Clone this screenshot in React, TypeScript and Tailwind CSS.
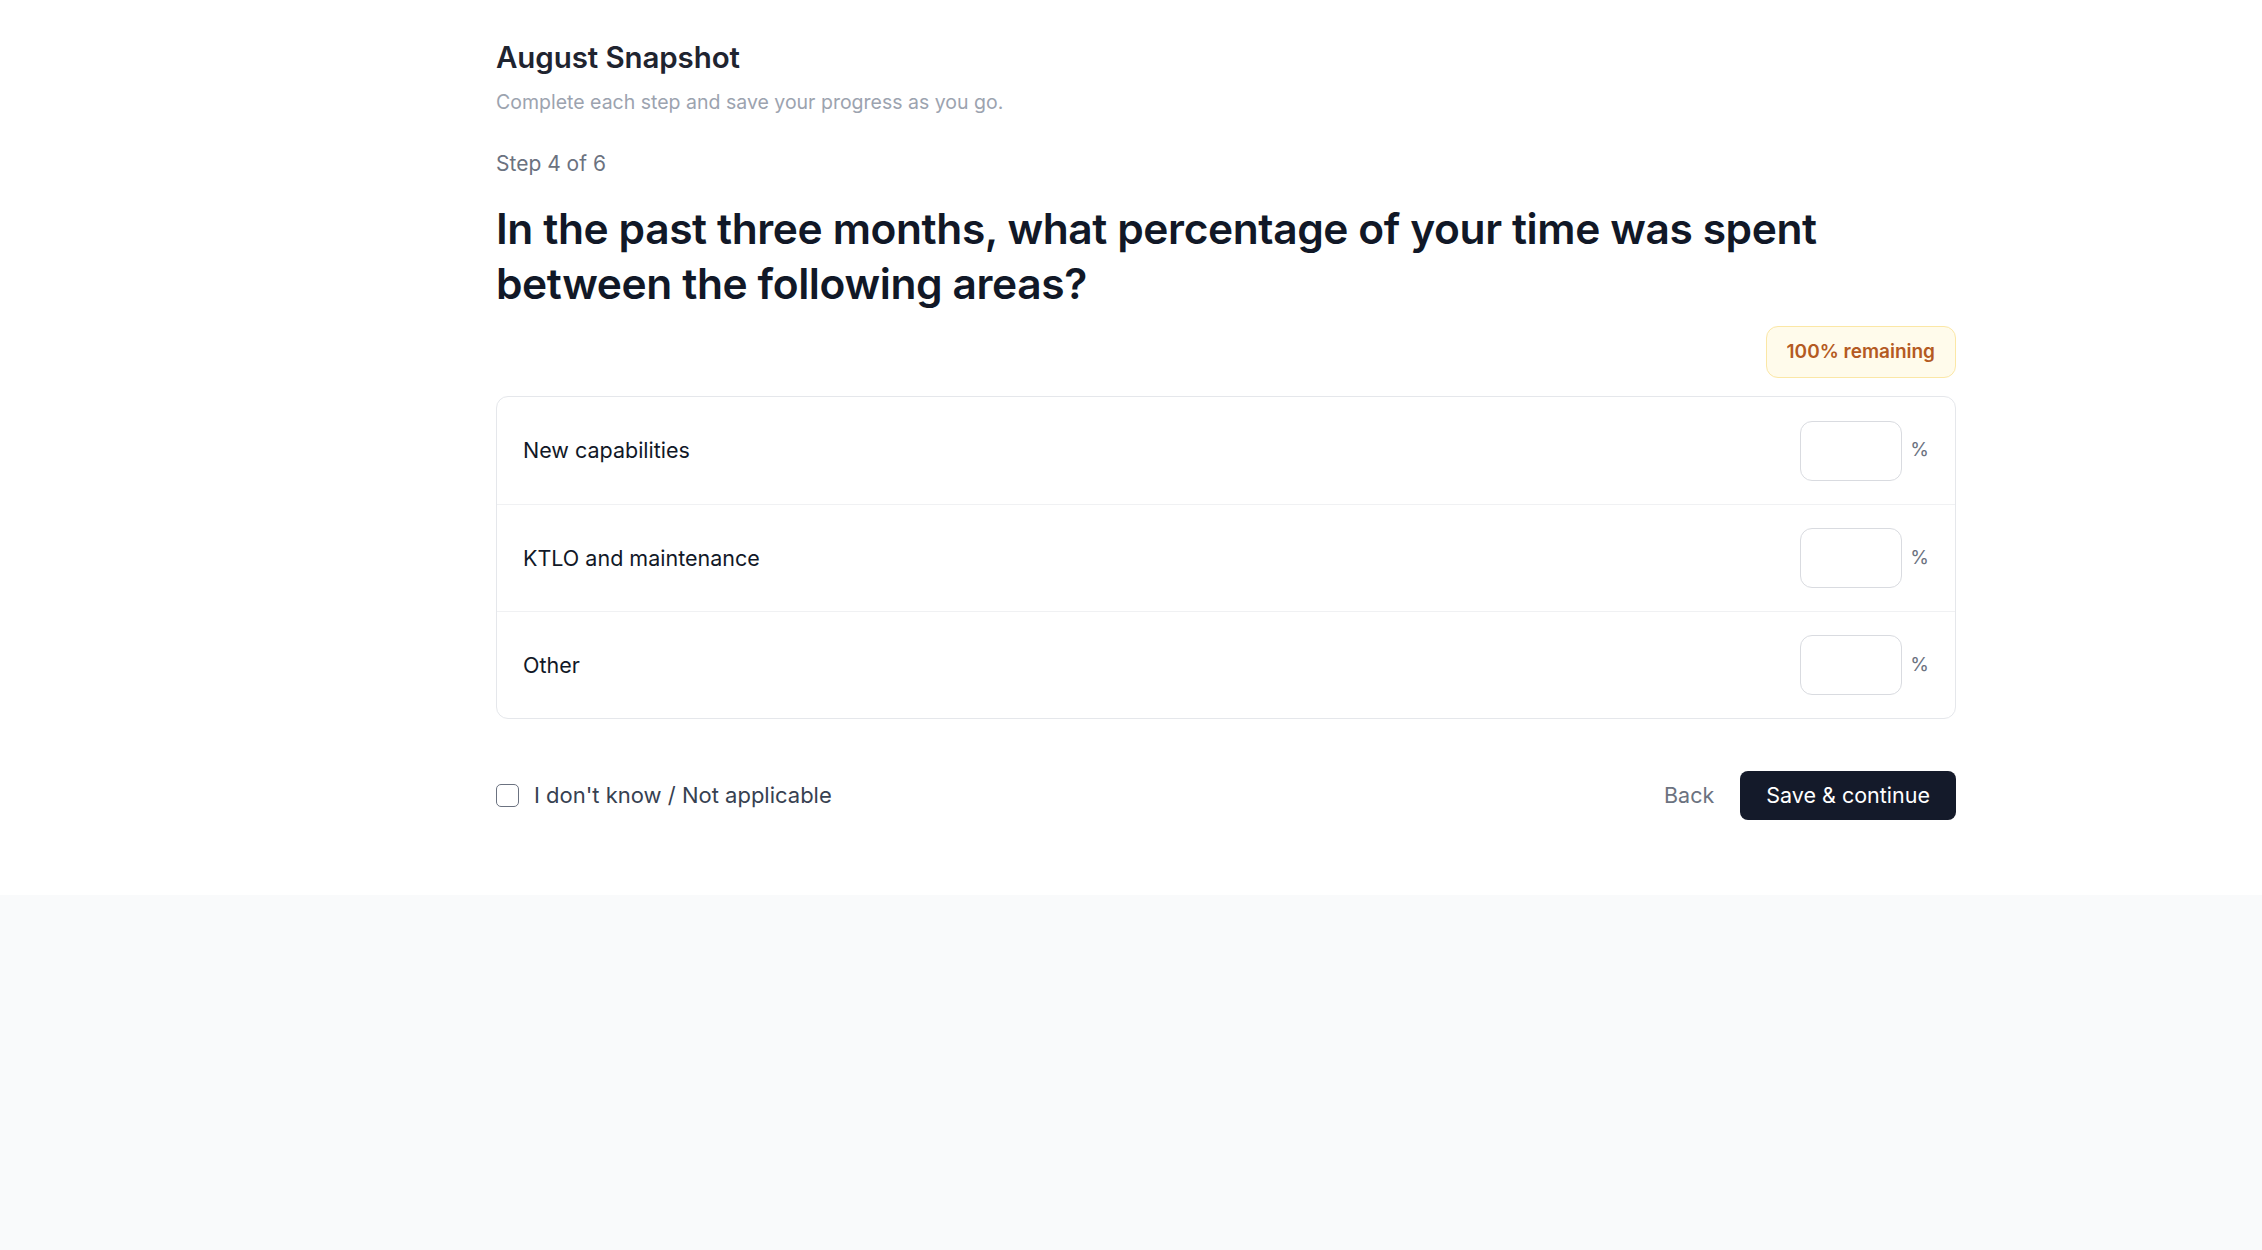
import React from "react";

const rows = ["New capabilities", "KTLO and maintenance", "Other"];

export default function App() {
  return (
    <div className="min-h-[1250px] bg-[#f9fafb]" style={{ fontFamily: "Inter, 'Noto Sans', sans-serif" }}>
      <div className="bg-white pl-[496px] pt-[37px] pb-[75px]">
        <div className="w-[1460px] flex flex-col">
          <h1 className="text-[29.5px] leading-[40px] font-semibold text-[#1f2430] tracking-[-0.1px]">August Snapshot</h1>
          <p className="mt-[11px] text-[19.5px] leading-[28px] text-[#9ca3af]">
            Complete each step and save your progress as you go.
          </p>
          <p className="mt-[32px] text-[21px] leading-[32px] text-[#6b7280]">Step 4 of 6</p>
          <h2 className="mt-[21px] text-[42.5px] leading-[55px] font-semibold text-[#111827] tracking-[-0.4px]">
            In the past three months, what percentage of your time was spent between the following areas?
          </h2>
          <div className="mt-[15px] flex justify-end">
            <span className="h-[52px] px-[20px] flex items-center rounded-[12px] border border-[#fbe7a6] bg-[#fffbeb] text-[19px] font-semibold text-[#b45a22]">
              100% remaining
            </span>
          </div>
          <div className="mt-[18px] rounded-[12px] border border-[#e5e7eb] bg-white">
            {rows.map((r, i) => (
              <div
                key={r}
                className={`flex items-center justify-between h-[107px] pl-[26px] pr-[26px] ${
                  i > 0 ? "border-t border-[#f0f1f3]" : ""
                }`}
              >
                <span className="text-[21.5px] text-[#111827]">{r}</span>
                <div className="flex items-center gap-[8px]">
                  <input
                    type="text"
                    className="w-[102px] h-[60px] rounded-[12px] border border-[#d9dbe0] bg-white outline-none px-3 text-[20px]"
                  />
                  <span className="text-[19px] text-[#6b7280]">%</span>
                </div>
              </div>
            ))}
          </div>
          <div className="mt-[52px] flex items-center justify-between">
            <label className="flex items-center gap-[15px]">
              <span className="w-[23px] h-[23px] rounded-[5px] border-[1.5px] border-[#6b7280] bg-white" />
              <span className="text-[22px] text-[#374151]">I don't know / Not applicable</span>
            </label>
            <div className="flex items-center gap-[26px]">
              <button className="text-[21.5px] text-[#6b7280]">Back</button>
              <button className="h-[49px] px-[26px] rounded-[8px] bg-[#141a2a] text-white text-[21.5px]">
                Save &amp; continue
              </button>
            </div>
          </div>
        </div>
      </div>
    </div>
  );
}
